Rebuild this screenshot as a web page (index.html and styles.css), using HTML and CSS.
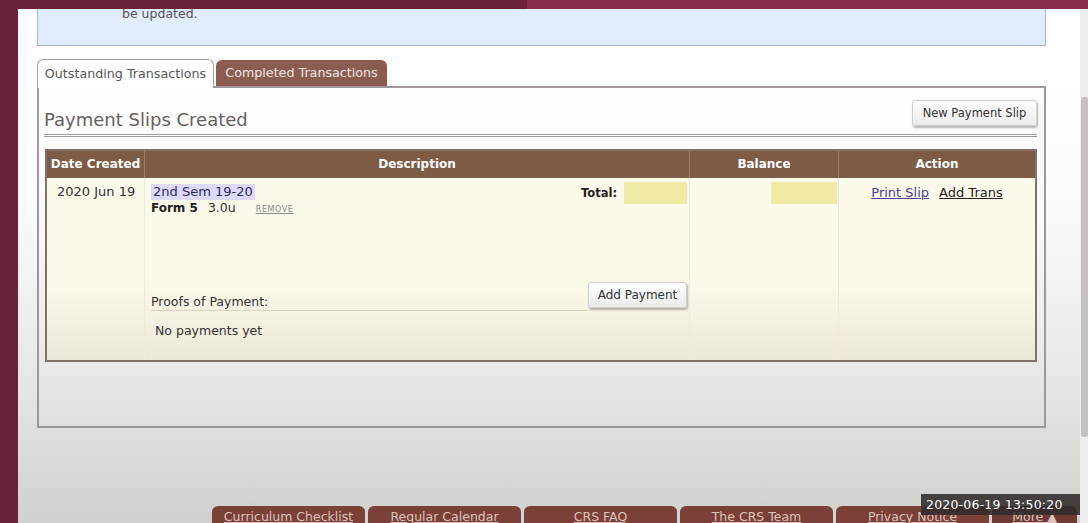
FILE: index.html
```html
<!DOCTYPE html>
<html lang="en">
<head>
<meta charset="utf-8">
<title>Payment Slips</title>
<link rel="stylesheet" href="styles.css">
</head>
<body>
<div class="shell">
  <div class="rail"></div>
  <div class="topbar"></div>
  <main class="main">
    <div class="notice"><p>be updated.</p></div>

    <div class="tabs">
      <span class="tab tab-active">Outstanding Transactions</span>
      <span class="tab tab-other">Completed Transactions</span>
    </div>

    <section class="panel">
      <header class="panel-head">
        <h2>Payment Slips Created</h2>
        <button class="btn btn-new" type="button">New Payment Slip</button>
      </header>

      <div class="slips">
        <div class="slips-head">
          <div>Date Created</div>
          <div>Description</div>
          <div>Balance</div>
          <div>Action</div>
        </div>
        <div class="slips-row">
          <div class="cell-date">2020 Jun 19</div>
          <div class="cell-desc">
            <div class="desc-top">
              <div class="course">
                <span class="sem">2nd Sem 19-20</span>
                <div class="form-line"><b>Form 5</b><span class="units">3.0u</span><a class="remove" href="#">REMOVE</a></div>
              </div>
              <div class="total"><b>Total:</b><span class="amount"></span></div>
            </div>
            <div class="proofs">
              <span class="proofs-label">Proofs of Payment:</span>
              <button class="btn btn-pay" type="button">Add Payment</button>
            </div>
            <div class="none">No payments yet</div>
          </div>
          <div class="cell-bal"><span class="amount amount-bal"></span></div>
          <div class="cell-act">
            <a class="link-print" href="#">Print Slip</a>
            <a class="link-add" href="#">Add Trans</a>
          </div>
        </div>
      </div>
    </section>

    <nav class="footer-tabs">
      <a class="ftab" href="#">Curriculum Checklist</a>
      <a class="ftab" href="#">Regular Calendar</a>
      <a class="ftab" href="#">CRS FAQ</a>
      <a class="ftab" href="#">The CRS Team</a>
      <a class="ftab" href="#">Privacy Notice</a>
      <a class="ftab ftab-more" href="#">More ▲</a>
    </nav>
  </main>
  <div class="scrollbar"><div class="thumb"></div></div>
</div>
<div class="stamp">2020-06-19 13:50:20</div>
</body>
</html>
```

FILE: styles.css
```css
* { box-sizing: border-box; }

html, body {
  margin: 0;
  padding: 0;
}

body {
  width: 1088px;
  height: 523px;
  overflow: hidden;
  position: relative;
  font-family: "DejaVu Sans", "Liberation Sans", sans-serif;
  font-size: 13px;
  color: #333;
  background: #fff;
}

/* page frame: maroon rail, top strip, content, scrollbar */
.shell {
  display: grid;
  grid-template-columns: 18px 1fr 8px;
  grid-template-rows: 9px 514px;
  height: 523px;
}

.rail {
  grid-row: 1 / 3;
  grid-column: 1;
  background: #6b2237;
}

.topbar {
  grid-row: 1;
  grid-column: 2 / 4;
  background: linear-gradient(to right, #6b2237 0, #6b2237 509px, #8a2f49 509px, #8a2f49 100%);
}

.main {
  grid-row: 2;
  grid-column: 2;
  overflow: hidden;
  padding: 0 34px 0 19px;
  background: linear-gradient(to bottom, #ffffff 0, #fbfbfb 200px, #e9e8e6 360px, #d2d0cd 514px);
}

.scrollbar {
  grid-row: 2;
  grid-column: 3;
  background: #eeeeee;
}

.thumb {
  margin-top: 88px;
  height: 340px;
  width: 7px;
  margin-left: 1px;
  border-radius: 2px;
  background: #c6c2c2;
}

/* info box, scrolled partly out of view */
.notice {
  margin-top: -6px;
  height: 43px;
  padding: 3px 0 0 84px;
  background: #e1edfc;
  border-left: 1px solid #a7b7d4;
  border-right: 1px solid #a7b7d4;
  border-bottom: 1px solid #a3b3d0;
}

.notice p {
  margin: 0;
  font-size: 12.5px;
  line-height: 16px;
  color: #555;
}

/* tab strip */
.tabs {
  margin-top: 13px;
  height: 27px;
  display: flex;
  align-items: flex-end;
  gap: 2px;
}

.tab {
  font-size: 12.7px;
  text-align: center;
  border-radius: 6px 6px 0 0;
}

.tab-active {
  position: relative;
  z-index: 1;
  width: 177px;
  height: 29px;
  margin-bottom: -2px;
  line-height: 27px;
  background: #fff;
  color: #5a5555;
  border: 1px solid #aaa2a2;
  border-bottom: none;
}

.tab-other {
  width: 171px;
  height: 26px;
  line-height: 26px;
  background: #8b5d51;
  color: #f3e6e2;
}

/* panel */
.panel {
  height: 342px;
  border: 2px solid #a0979a;
  padding: 0 7px 0 5px;
}

.panel-head {
  display: flex;
  justify-content: space-between;
  align-items: flex-end;
  padding-top: 12px;
  padding-bottom: 4px;
  border-bottom: 3px double #a39a9a;
}

.panel-head h2 {
  margin: 0;
  font-size: 18px;
  font-weight: normal;
  line-height: 21px;
  color: #676060;
}

.btn {
  font-family: "DejaVu Sans", "Liberation Sans", sans-serif;
  color: #333;
  background: linear-gradient(#ffffff, #ebebeb);
  border: 1px solid #cfcfcf;
  border-radius: 3px;
  box-shadow: 1px 2px 2px rgba(0, 0, 0, 0.28);
  padding: 0;
}

.btn-new {
  width: 125px;
  height: 26px;
  margin-bottom: 4px;
  font-size: 11.5px;
}

/* slips table */
.slips {
  margin-top: 12px;
  margin-left: 1px;
  height: 213px;
  border: 2px solid #7f726c;
}

.slips-head,
.slips-row {
  display: grid;
  grid-template-columns: 97px 545px 149px 1fr;
}

.slips-head {
  height: 27px;
  background: #7d5b45;
  color: #fff;
  font-weight: bold;
  font-size: 12px;
  line-height: 27px;
  text-align: center;
}

.slips-head > div + div {
  border-left: 1px solid #9b7e69;
}

.slips-row {
  height: 182px;
  background: linear-gradient(to bottom, #fcfaea 0, #faf8e6 60%, #ece8d8 100%);
}

.slips-row > div + div {
  border-left: 1px solid #efebd8;
}

.cell-date {
  padding: 6px 0 0 10px;
  line-height: 16px;
  font-size: 13px;
}

.cell-desc {
  padding: 4px 2px 0 6px;
}

.desc-top {
  display: flex;
  justify-content: space-between;
  align-items: flex-start;
}

.course {
  padding-top: 2px;
  line-height: 16px;
}

.sem {
  display: inline-block;
  padding: 0 2px;
  background: #dcdaf7;
  color: #2b2a5e;
  font-size: 13px;
}

.form-line {
  font-size: 12.5px;
}

.form-line b {
  font-size: 12px;
  color: #222;
}

.units {
  margin-left: 10px;
}

.remove {
  margin-left: 20px;
  font-size: 8px;
  letter-spacing: 0.6px;
  color: #8a8a8a;
  text-decoration: underline;
}

.total {
  display: flex;
  align-items: center;
  gap: 7px;
}

.total b {
  font-size: 11.5px;
  color: #222;
}

.amount {
  display: block;
  width: 63px;
  height: 22px;
  background: #f1eaa5;
}

.amount-bal {
  width: 66px;
}

.proofs {
  margin-top: 64px;
  display: flex;
  align-items: flex-end;
}

.proofs-label {
  flex: 1;
  font-size: 12.5px;
  line-height: 16px;
  border-bottom: 1px solid #d6d2c2;
  color: #333;
}

.btn-pay {
  width: 99px;
  height: 26px;
  margin-bottom: 3px;
  font-size: 12px;
}

.none {
  margin-top: 12px;
  padding-left: 4px;
  font-size: 12.5px;
  line-height: 16px;
}

.cell-bal {
  padding: 4px 1px 0 0;
  display: flex;
  justify-content: flex-end;
  align-items: flex-start;
}

.cell-act {
  padding-top: 4px;
  display: flex;
  justify-content: center;
  align-items: flex-start;
  gap: 10px;
  font-size: 13px;
  line-height: 22px;
}

.link-print {
  color: #4b3f9a;
  text-decoration: underline;
}

.link-add {
  color: #222;
  text-decoration: underline;
}

/* bottom navigation tabs */
.footer-tabs {
  margin-top: 78px;
  margin-left: 175px;
  display: flex;
  gap: 3px;
}

.ftab {
  flex: 0 0 153px;
  height: 24px;
  padding-top: 3px;
  line-height: 16px;
  border-radius: 6px 6px 0 0;
  background: #7b4037;
  color: #dcc3bb;
  font-size: 12.5px;
  text-align: center;
  text-decoration: underline;
}

.ftab-more {
  flex-basis: 85px;
  background: #6e3a33;
}

/* recording timestamp overlay */
.stamp {
  position: absolute;
  left: 921px;
  top: 494px;
  width: 159px;
  height: 21px;
  padding-left: 5px;
  background: rgba(48, 43, 43, 0.88);
  color: #fff;
  font-size: 12.5px;
  line-height: 21px;
  letter-spacing: 0.2px;
}
```
